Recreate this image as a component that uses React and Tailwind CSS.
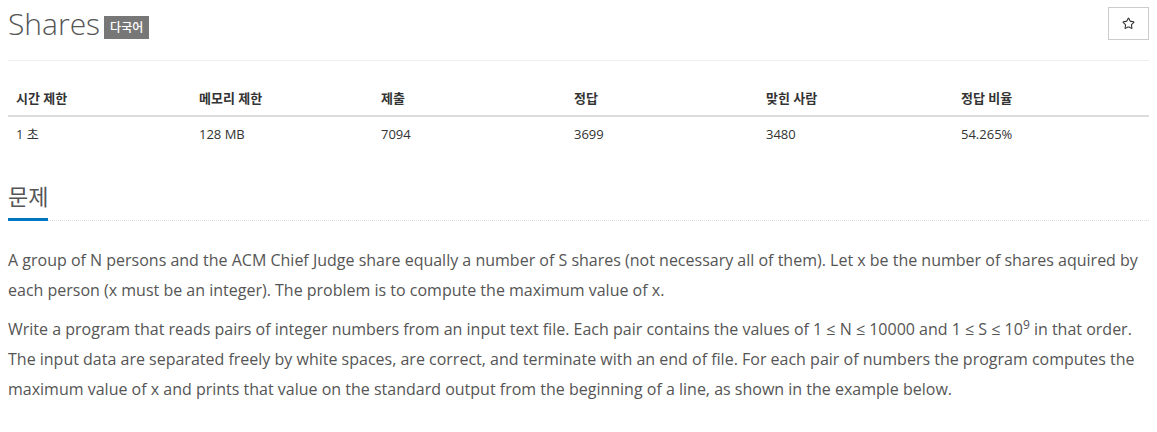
import { Star } from 'lucide-react'

const font = { fontFamily: '"Open Sans", "Noto Sans CJK KR", sans-serif' }

const stats = [
  { label: '시간 제한', value: '1 초', w: 'w-[183px]' },
  { label: '메모리 제한', value: '128 MB', w: 'w-[182px]' },
  { label: '제출', value: '7094', w: 'w-[193px]' },
  { label: '정답', value: '3699', w: 'w-[192px]' },
  { label: '맞힌 사람', value: '3480', w: 'w-[195px]' },
  { label: '정답 비율', value: '54.265%', w: '' },
]

export default function App() {
  return (
    <div className="bg-white px-2 text-[#555]" style={font}>
      <div className="flex items-start justify-between pt-[7px]">
        <h1 className="flex items-center gap-[4px] text-[30px] font-light leading-[34px] text-[#555]">
          Shares
          <span className="mt-[6px] bg-[#777] px-[6px] py-[3px] text-[12px] font-medium leading-[17px] text-white">다국어</span>
        </h1>
        <button className="flex h-[33px] w-[41px] items-center justify-center border border-[#ccc] bg-white">
          <Star className="size-[13px] text-[#333]" strokeWidth={2} />
        </button>
      </div>
      <div className="mt-[19px] border-t border-[#eee]" />

      <table className="mt-[27px] w-full border-collapse text-[13px] text-[#333]">
        <thead>
          <tr className="border-b-2 border-[#ddd]">
            {stats.map((s) => (
              <th key={s.label} className={`${s.w} px-2 pb-[7px] text-left font-bold leading-[20px]`}>{s.label}</th>
            ))}
          </tr>
        </thead>
        <tbody>
          <tr>
            {stats.map((s) => (
              <td key={s.label} className="px-2 pt-[7px] pb-[8px] leading-[20px]">{s.value}</td>
            ))}
          </tr>
        </tbody>
      </table>

      <div className="mt-[30px] flex items-end">
        <h2 className="border-b-[3px] border-[#0076c0] pb-[8px] text-[22px] leading-[28px] text-[#555]">문제</h2>
        <div className="flex-1 border-b border-dotted border-[#ddd]" />
      </div>

      <div className="mt-[24px] text-[16px] leading-[30px] text-[#555]">
        <p>
          A group of N persons and the ACM Chief Judge share equally a number of S shares (not necessary all of them). Let x be the number of shares aquired by each person (x must be an integer). The problem is to compute the maximum value of x.
        </p>
        <p className="mt-[9px]">
          Write a program that reads pairs of integer numbers from an input text file. Each pair contains the values of 1 ≤ N ≤ 10000 and 1 ≤ S ≤ 10<sup className="text-[12px] leading-none">9</sup> in that order. The input data are separated freely by white spaces, are correct, and terminate with an end of file. For each pair of numbers the program computes the maximum value of x and prints that value on the standard output from the beginning of a line, as shown in the example below.
        </p>
      </div>
    </div>
  )
}
